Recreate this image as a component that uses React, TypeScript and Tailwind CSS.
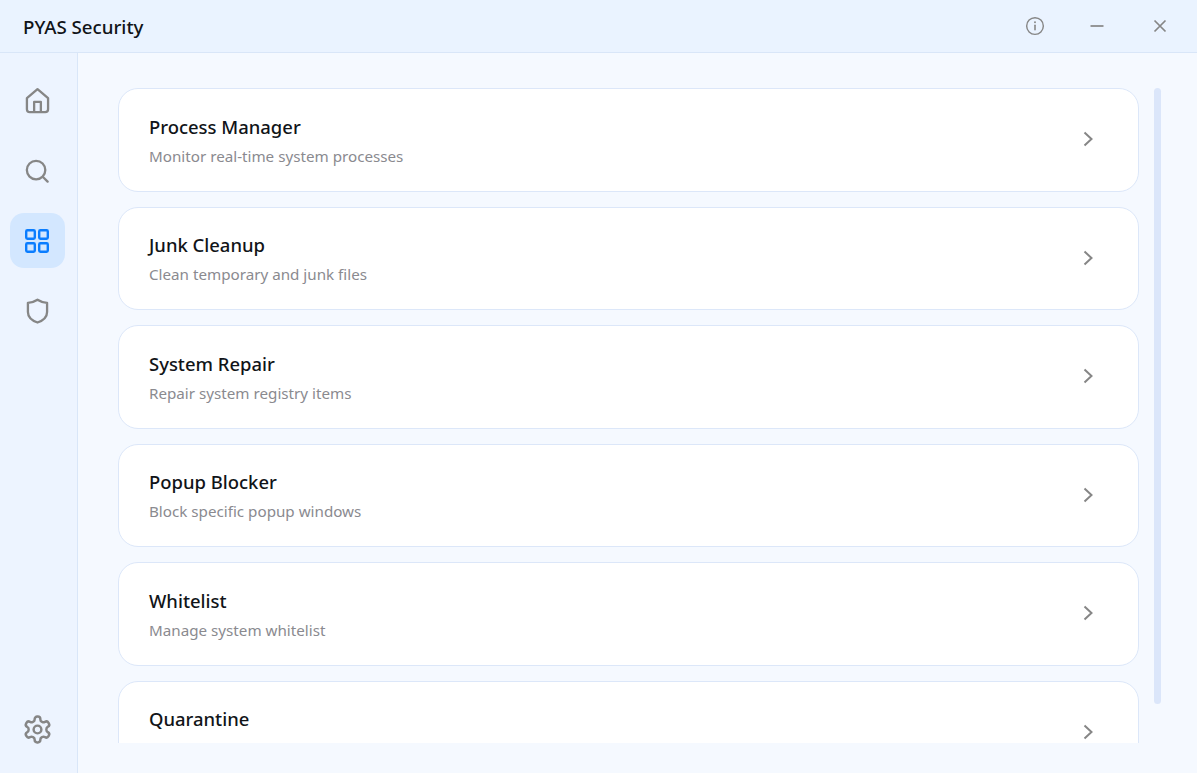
import React from "react";

const items = [
  ["Process Manager", "Monitor real-time system processes"],
  ["Junk Cleanup", "Clean temporary and junk files"],
  ["System Repair", "Repair system registry items"],
  ["Popup Blocker", "Block specific popup windows"],
  ["Whitelist", "Manage system whitelist"],
  ["Quarantine", "Manage quarantined files"],
];

function Icon({ children, size = 26, className = "" }: { children: React.ReactNode; size?: number; className?: string }) {
  return (
    <svg width={size} height={size} viewBox="0 0 24 24" fill="none" stroke="currentColor" strokeWidth={2} strokeLinecap="round" strokeLinejoin="round" className={className}>
      {children}
    </svg>
  );
}

export default function App() {
  return (
    <div className="w-[1197px] h-[773px] flex flex-col overflow-hidden bg-[#f5f9ff] font-['Noto_Sans',sans-serif]">
      <header className="h-[53px] shrink-0 flex items-center justify-between bg-[#eaf3ff] border-b border-[#d9e6f8] pl-[23px] pr-[27px]">
        <div className="pt-[2px] text-[18.7px] font-medium text-[#111418]">PYAS Security</div>
        <div className="flex items-center gap-[42px] pb-[1px] text-[#868686]">
          <Icon size={20}>
            <circle cx="12" cy="12" r="10" strokeWidth={1.7} />
            <path d="M12 11v5.500" strokeWidth={1.9} />
            <path d="M12 7.500h.01" strokeWidth={2.3} />
          </Icon>
          <svg width="20" height="20" viewBox="0 0 20 20" fill="none" stroke="currentColor" strokeWidth="1.7" className="mr-[1px]"><path d="M3.500 10h13" /></svg>
          <svg width="20" height="20" viewBox="0 0 20 20" fill="none" stroke="currentColor" strokeWidth="1.7"><path d="M4.500 4.500l11 11M15.500 4.500l-11 11" /></svg>
        </div>
      </header>
      <div className="flex-1 flex min-h-0">
        <aside className="w-[78px] shrink-0 bg-[#edf4ff] border-r border-[#d9e6f8] flex flex-col items-center pt-[20px] pb-[16px] pr-[3px] text-[#868686]">
          <div className="flex flex-col gap-[15px]">
            <button className="w-[55px] h-[55px] flex items-center justify-center">
              <svg width="25" height="27" viewBox="0 0 26 28" fill="none" stroke="currentColor" strokeWidth="2.400" strokeLinejoin="round"><path d="M2 11.500 13 2.200l11 9.300V23a3 3 0 0 1-3 3H5a3 3 0 0 1-3-3Z" /><path d="M9.500 26V15.500h7V26" /></svg>
            </button>
            <button className="w-[55px] h-[55px] flex items-center justify-center">
              <svg width="24" height="24" viewBox="0 0 26 26" fill="none" stroke="currentColor" strokeWidth="2.500" strokeLinecap="round"><circle cx="12" cy="12" r="10" /><path d="m20 20 4.500 4.500" /></svg>
            </button>
            <button className="w-[55px] h-[55px] rounded-[14px] bg-[#d3e7ff] text-[#0a7dff] flex items-center justify-center">
              <svg width="24" height="24" viewBox="0 0 24 24" fill="none" stroke="currentColor" strokeWidth="2.400" strokeLinejoin="round"><rect x="1.200" y="1.200" width="8.600" height="8.600" rx="1.200" /><rect x="14.200" y="1.200" width="8.600" height="8.600" rx="1.200" /><rect x="1.200" y="14.200" width="8.600" height="8.600" rx="1.200" /><rect x="14.200" y="14.200" width="8.600" height="8.600" rx="1.200" /></svg>
            </button>
            <button className="w-[55px] h-[55px] flex items-center justify-center">
              <svg width="23" height="26" viewBox="0 0 24 27" fill="none" stroke="currentColor" strokeWidth="2.400" strokeLinejoin="round"><path d="M12 1.800c3 2 6 3 10 3.200v9.500c0 5-3.600 8.700-10 11-6.400-2.300-10-6-10-11V5c4-.2 7-1.200 10-3.200Z" /></svg>
            </button>
          </div>
          <button className="mt-auto w-[55px] h-[55px] flex items-center justify-center">
            <Icon size={31} className="[stroke-width:1.9]">
              <path d="M12.220 2h-.44a2 2 0 0 0-2 2v.18a2 2 0 0 1-1 1.730l-.43.25a2 2 0 0 1-2 0l-.15-.08a2 2 0 0 0-2.730.73l-.22.38a2 2 0 0 0 .73 2.730l.15.1a2 2 0 0 1 1 1.720v.51a2 2 0 0 1-1 1.740l-.15.09a2 2 0 0 0-.73 2.730l.22.38a2 2 0 0 0 2.730.73l.15-.08a2 2 0 0 1 2 0l.43.25a2 2 0 0 1 1 1.730V20a2 2 0 0 0 2 2h.44a2 2 0 0 0 2-2v-.18a2 2 0 0 1 1-1.730l.43-.25a2 2 0 0 1 2 0l.15.08a2 2 0 0 0 2.730-.73l.22-.39a2 2 0 0 0-.73-2.730l-.15-.08a2 2 0 0 1-1-1.740v-.5a2 2 0 0 1 1-1.740l.15-.09a2 2 0 0 0 .73-2.730l-.22-.38a2 2 0 0 0-2.730-.73l-.15.08a2 2 0 0 1-2 0l-.43-.25a2 2 0 0 1-1-1.730V4a2 2 0 0 0-2-2z" />
              <circle cx="12" cy="12" r="3" />
            </Icon>
          </button>
        </aside>
        <main className="flex-1 min-w-0 flex pl-10 pt-[35px] pb-[30px]">
          <div className="w-[1021px] shrink-0 overflow-hidden flex flex-col gap-[15px]">
            {items.map(([title, sub]) => (
              <div key={title} className="h-[103.5px] shrink-0 flex items-center justify-between rounded-[20px] bg-white border border-[#dce7f9] pl-[30px] pr-[40px]">
                <div className="flex flex-col pb-[0.4px]">
                  <div className="text-[18.45px] leading-[25px] font-medium text-[#111418]">{title}</div>
                  <div className="mt-[7px] text-[15.2px] leading-[20px] text-[#8a8a8f]">{sub}</div>
                </div>
                <svg width="20" height="20" viewBox="0 0 20 20" fill="none" stroke="#868686" strokeWidth="2" className="-mt-[1px]"><path d="m6.500 3.500 7 6.500-7 6.500" /></svg>
              </div>
            ))}
          </div>
          <div className="ml-[15px] w-[7px] h-[616px] rounded-full bg-[#dbe6fa] shrink-0" />
        </main>
      </div>
    </div>
  );
}
